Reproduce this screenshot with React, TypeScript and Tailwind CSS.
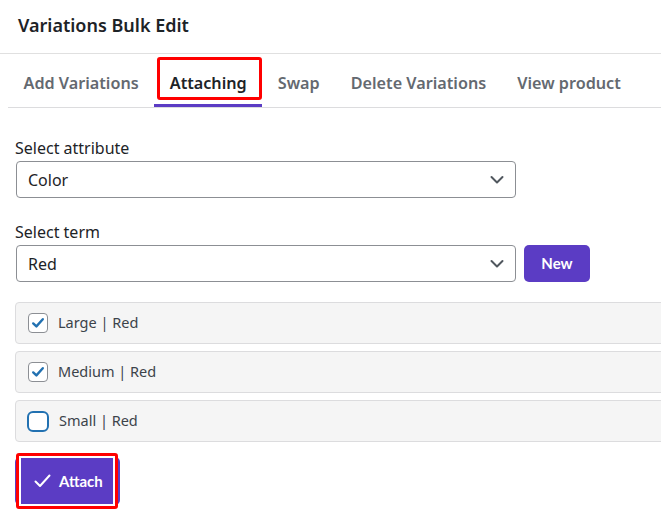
import React from "react";

const seg = { fontFamily: '"Noto Sans", "Open Sans", sans-serif' };
const lato = { fontFamily: 'Lato, "Noto Sans", sans-serif' };

function Chevron() {
  return (
    <svg width="14" height="9" viewBox="0 0 14 9" className="absolute right-[11px] top-1/2 -translate-y-1/2">
      <path d="M1.5 1.5 L7 7 L12.5 1.5" fill="none" stroke="#50575e" strokeWidth="2" strokeLinecap="round" strokeLinejoin="round" />
    </svg>
  );
}

function Select({ value }: { value: string }) {
  return (
    <div className="relative w-[500px] h-[37px] border border-[#8c8f94] rounded-[4px] bg-white flex items-center pl-[11px] text-[16px] text-[#1d2327]" style={seg}>
      {value}
      <Chevron />
    </div>
  );
}

function Row({ label, state }: { label: string; state: "checked" | "focus" }) {
  return (
    <div className="h-[42px] w-[700px] bg-[#f5f5f5] border border-[#dcdcde] rounded-[4px] flex items-center pl-[12px] gap-[10px]">
      {state === "checked" ? (
        <div className="w-[20px] h-[20px] border border-[#8c8f94] rounded-[4px] bg-white flex items-center justify-center">
          <svg width="16" height="16" viewBox="0 0 16 16">
            <path d="M3.2 8.4 L6.4 11.4 L12.8 4.2" fill="none" stroke="#2271b1" strokeWidth="2.4" strokeLinecap="round" strokeLinejoin="round" />
          </svg>
        </div>
      ) : (
        <div className="w-[22px] h-[21px] -ml-[1px] border-[2.5px] border-[#2271b1] rounded-[6px] bg-white" />
      )}
      <span className="text-[14.5px] text-[#3c434a]" style={seg}>{label}</span>
    </div>
  );
}

export default function App() {
  return (
    <div className="w-[661px] h-[522px] overflow-hidden bg-white relative">
      <div className="h-[54px] border-b border-[#e0e0e0] flex items-center pl-[18px]">
        <h1 className="text-[18px] font-semibold text-[#1d2327] -mt-[2px]" style={seg}>Variations Bulk Edit</h1>
      </div>
      <div className="ml-[8px] h-[54px] border-b border-[#dcdcde] flex items-end">
        {["Add Variations", "Attaching", "Swap", "Delete Variations", "View product"].map((t) => (
          <div
            key={t}
            className={
              "px-[15.5px] h-full flex items-center pt-[8px] text-[16.2px] font-semibold " +
              (t === "Attaching" ? "text-[#1d2327] border-b-[3px] border-[#5b3cc4]" : "text-[#646970] border-b-[3px] border-transparent")
            }
            style={seg}
          >
            {t}
          </div>
        ))}
      </div>

      <div className="pl-[15px] pt-[29px] flex flex-col">
        <label className="text-[16px] text-[#1d2327] leading-[22px] mb-[2px]" style={seg}>Select attribute</label>
        <div className="pl-[1px]"><Select value="Color" /></div>
        <label className="text-[16px] text-[#1d2327] leading-[22px] mt-[23px] mb-[2px]" style={seg}>Select term</label>
        <div className="pl-[1px] flex gap-[8px]">
          <Select value="Red" />
          <button className="w-[66px] h-[37px] rounded-[5px] bg-[#5b3cc4] text-white text-[15px] font-bold" style={lato}>New</button>
        </div>
        <div className="mt-[20px] flex flex-col gap-[7px]">
          <Row label="Large | Red" state="checked" />
          <Row label="Medium | Red" state="checked" />
          <Row label="Small | Red" state="focus" />
        </div>
        <div className="mt-[15px]">
          <button className="w-[105px] h-[48px] rounded-[5px] bg-[#5b3cc4] text-white text-[15px] font-bold flex items-center pl-[19px] gap-[8px]" style={lato}>
            <svg width="17" height="14" viewBox="0 0 17 14">
              <path d="M1.5 7.5 L6 12 L15.5 1.5" fill="none" stroke="white" strokeWidth="2" strokeLinecap="round" strokeLinejoin="round" />
            </svg>
            Attach
          </button>
        </div>
      </div>

      <div className="absolute left-[157px] top-[57px] w-[105px] h-[43px] border-[3px] border-[#ff0000] rounded-[3px]" />
      <div className="absolute left-[16px] top-[453px] w-[102px] h-[56px] border-[3px] border-[#ff0000] rounded-[3px] shadow-[inset_0_0_0_2px_white]" />
    </div>
  );
}
